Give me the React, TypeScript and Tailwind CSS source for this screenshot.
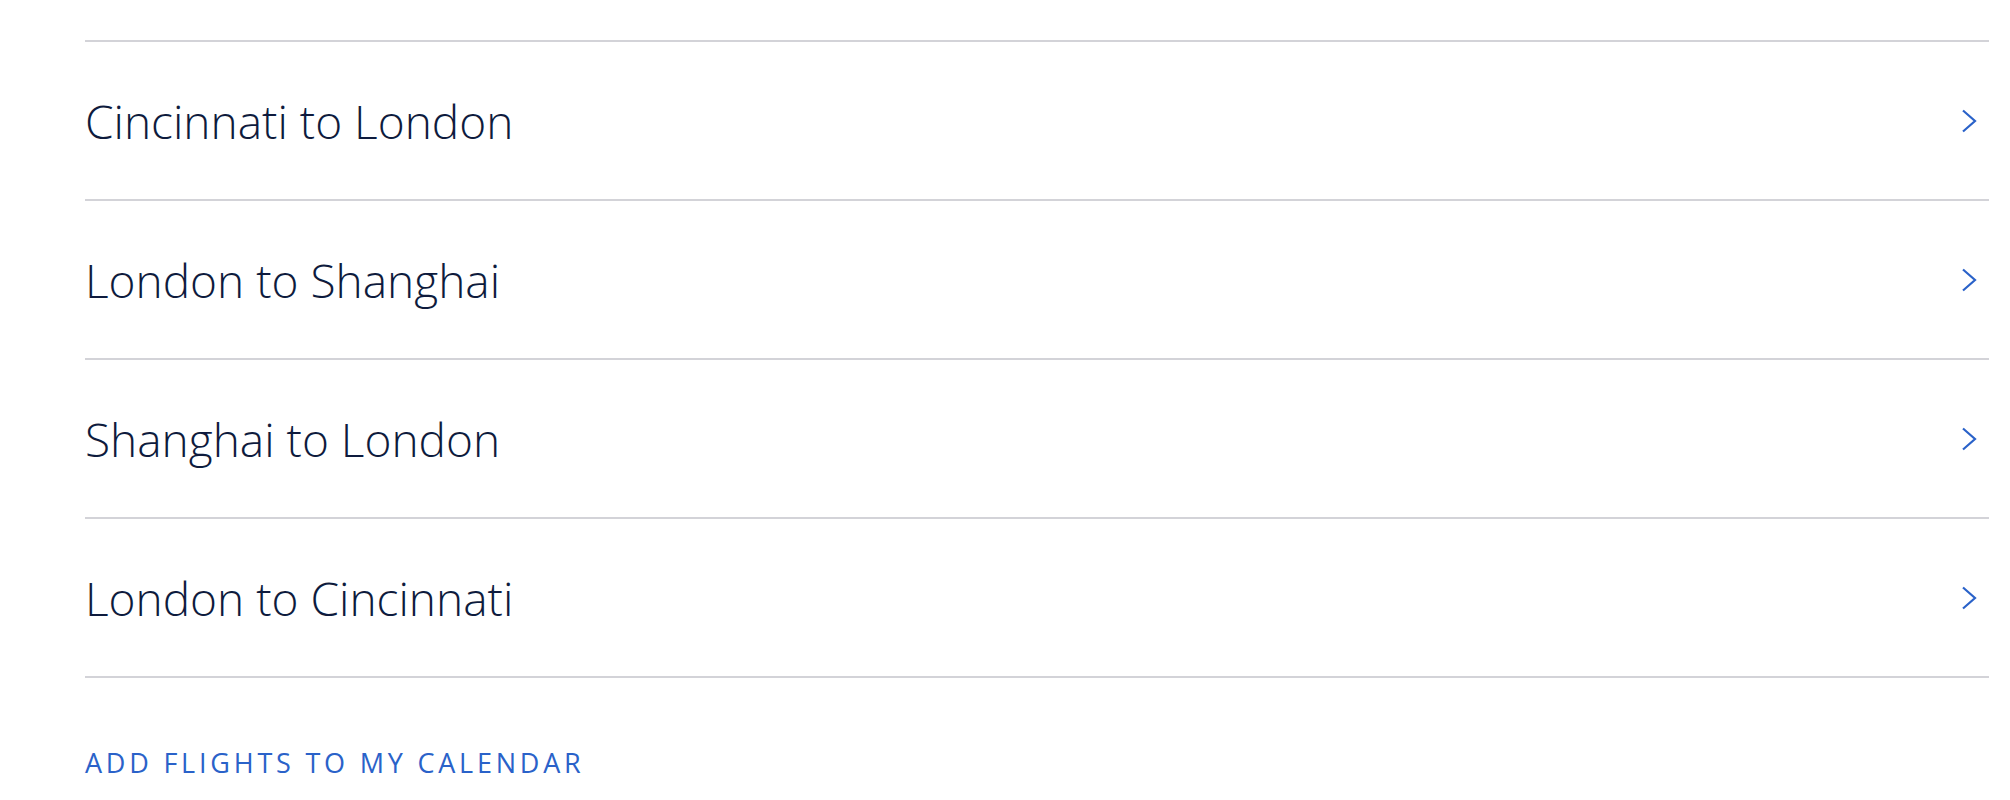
import React from "react";

const flights = [
    "Cincinnati to London",
    "London to Shanghai",
    "Shanghai to London",
    "London to Cincinnati",
];

const Chevron = () => (
    <svg width="16" height="24" viewBox="0 0 16 24" fill="none" className="shrink-0">
        <path d="M2 1.5 L14 12 L2 22.5" stroke="#2a62c9" strokeWidth="2.2" strokeLinejoin="miter" />
    </svg>
);

const App = () => {
    return (
        <div className="min-h-[800px] bg-white pl-[85px] pr-[21px] pt-[40px] font-['Open_Sans',sans-serif]">
            <ul className="border-b-2 border-[#d3d3d8]">
                {flights.map((flight) => (
                    <li
                        key={flight}
                        className="flex h-[159px] items-center justify-between border-t-2 border-[#d3d3d8] pr-[12px]"
                    >
                        <span className="text-[46px] font-light leading-none text-[#0e1b3d]">{flight}</span>
                        <Chevron />
                    </li>
                ))}
            </ul>
            <div className="pt-[71px]">
                <a className="text-[27px] leading-none tracking-[0.14em] text-[#2a62c9]">ADD FLIGHTS TO MY CALENDAR</a>
            </div>
        </div>
    );
};

export default App;
